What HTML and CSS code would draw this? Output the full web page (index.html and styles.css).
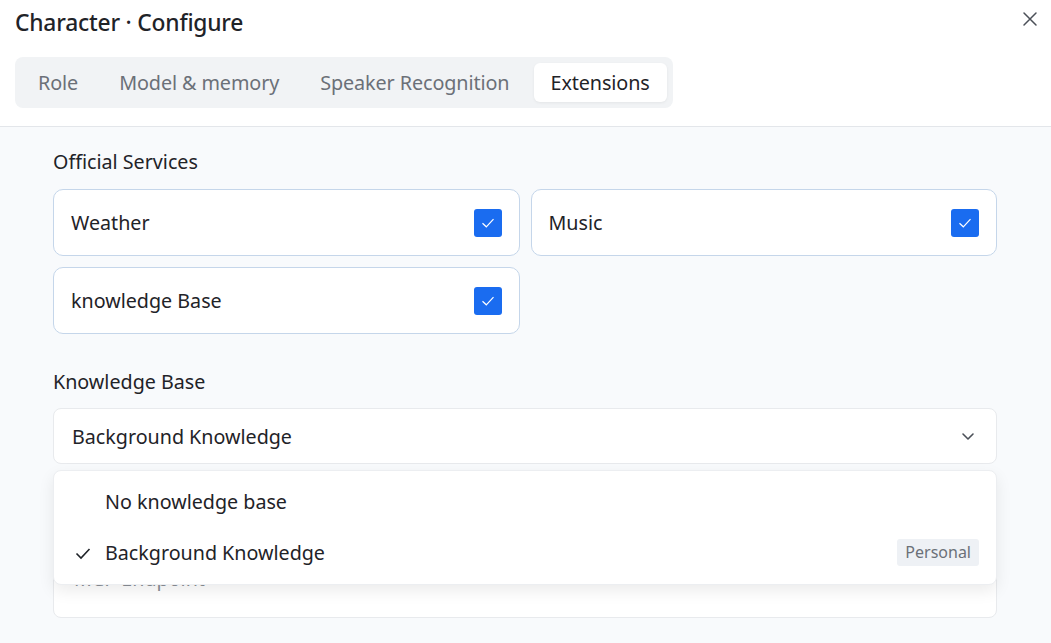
FILE: index.html
```html
<!DOCTYPE html>
<html lang="en">
<head>
    <meta charset="UTF-8">
    <meta name="viewport" content="width=device-width, initial-scale=1.0">
    <title>Character · Configure</title>
    <link rel="stylesheet" href="styles.css">
</head>
<body>
    <div class="dialog">
        <div class="dialog-header">
            <h1 class="title">Character · Configure</h1>
            <button class="close-btn" aria-label="Close">
                <svg width="16" height="16" viewBox="0 0 16 16"><path d="M2 2 L14 14 M14 2 L2 14" stroke="#4b5058" stroke-width="1.5" fill="none" stroke-linecap="round"/></svg>
            </button>
            <div class="tabs">
                <div class="tab">Role</div>
                <div class="tab">Model &amp; memory</div>
                <div class="tab">Speaker Recognition</div>
                <div class="tab active">Extensions</div>
            </div>
        </div>

        <div class="dialog-body">
            <div class="section-label">Official Services</div>
            <div class="service-grid">
                <div class="service-card">
                    <span>Weather</span>
                    <span class="checkbox"><svg width="18" height="18" viewBox="0 0 18 18"><path d="M3.5 9.2 L7.3 12.8 L14.5 5.2" stroke="#fff" stroke-width="1.2" fill="none"/></svg></span>
                </div>
                <div class="service-card">
                    <span>Music</span>
                    <span class="checkbox"><svg width="18" height="18" viewBox="0 0 18 18"><path d="M3.5 9.2 L7.3 12.8 L14.5 5.2" stroke="#fff" stroke-width="1.2" fill="none"/></svg></span>
                </div>
                <div class="service-card">
                    <span>knowledge Base</span>
                    <span class="checkbox"><svg width="18" height="18" viewBox="0 0 18 18"><path d="M3.5 9.2 L7.3 12.8 L14.5 5.2" stroke="#fff" stroke-width="1.2" fill="none"/></svg></span>
                </div>
            </div>

            <div class="section-label kb-label">Knowledge Base</div>
            <div class="select-wrap">
                <div class="select">
                    <span>Background Knowledge</span>
                    <svg width="16" height="16" viewBox="0 0 16 16"><path d="M3 6 L8 11 L13 6" stroke="#4b5058" stroke-width="1.6" fill="none" stroke-linecap="round" stroke-linejoin="round"/></svg>
                </div>
                <div class="dropdown">
                    <div class="option">
                        <span class="option-check"></span>
                        <span>No knowledge base</span>
                    </div>
                    <div class="option">
                        <span class="option-check"><svg width="18" height="18" viewBox="0 0 18 18"><path d="M2.5 9.5 L7 14 L15.5 5" stroke="#1f2328" stroke-width="1.6" fill="none"/></svg></span>
                        <span>Background Knowledge</span>
                        <span class="badge">Personal</span>
                    </div>
                </div>
            </div>

            <div class="section-label mcp-label">MCP Endpoint</div>
            <div class="input">MCP Endpoint</div>
        </div>
    </div>
</body>
</html>
```

FILE: styles.css
```css
* {
    box-sizing: border-box;
}

body {
    margin: 0;
    font-family: "Noto Sans", "Liberation Sans", sans-serif;
    color: #1f2328;
    background: #f8fafc;
    height: 100vh;
    overflow: hidden;
}

.dialog-header {
    position: relative;
    background: #fff;
    border-bottom: 1px solid #e3e6ea;
    padding: 6px 15px 18px;
    height: 127px;
}

.title {
    margin: 0;
    font-size: 22.8px;
    font-weight: 500;
    line-height: 34px;
    letter-spacing: -0.2px;
}

.close-btn {
    position: absolute;
    top: 11px;
    right: 13px;
    background: none;
    border: none;
    padding: 0;
    cursor: pointer;
}

.tabs {
    display: inline-flex;
    gap: 7px;
    margin-top: 17px;
    padding: 6px;
    background: #f1f3f5;
    border-radius: 8px;
}

.tab {
    padding: 0 17px;
    height: 39px;
    line-height: 39px;
    font-size: 19.8px;
    letter-spacing: -0.1px;
    color: #6b7078;
    border-radius: 6px;
}

.tab.active {
    background: #fff;
    color: #1f2328;
    box-shadow: 0 1px 3px rgba(0, 0, 0, 0.06);
}

.dialog-body {
    padding: 20px 54px 0 53px;
}

.section-label {
    font-size: 19.7px;
    line-height: 30px;
    margin-bottom: 12px;
}

.service-grid {
    display: grid;
    grid-template-columns: 1fr 1fr;
    gap: 11px 11px;
}

.service-card {
    display: flex;
    align-items: center;
    justify-content: space-between;
    height: 67px;
    padding: 0 17px;
    background: #fff;
    border: 1px solid #c5d6ea;
    border-radius: 10px;
    font-size: 19.7px;
}

.checkbox {
    width: 28px;
    height: 28px;
    border-radius: 3px;
    background: #1a6cf0;
    display: flex;
    align-items: center;
    justify-content: center;
}

.kb-label {
    margin-top: 33px;
    margin-bottom: 11px;
}

.select-wrap {
    position: relative;
}

.select {
    display: flex;
    align-items: center;
    justify-content: space-between;
    height: 56px;
    padding: 0 20px 0 18px;
    background: #fff;
    border: 1px solid #e8eaed;
    border-radius: 8px;
    font-size: 19.7px;
}

.dropdown {
    position: absolute;
    top: 62px;
    left: 0;
    right: 0;
    z-index: 2;
    background: #fff;
    border: 1px solid #eceef1;
    border-radius: 8px;
    box-shadow: 0 6px 16px rgba(0, 0, 0, 0.08);
    padding: 5px 17px 6px 20px;
}

.option {
    display: flex;
    align-items: center;
    height: 51px;
    font-size: 19.7px;
}

.option-check {
    width: 31px;
    display: flex;
    align-items: center;
}

.badge {
    margin-left: auto;
    background: #eef1f5;
    color: #6b7078;
    font-size: 16px;
    padding: 0 8px;
    height: 27px;
    line-height: 27px;
    border-radius: 3px;
}

.mcp-label {
    margin-top: 48px;
}

.input {
    height: 64px;
    padding: 10px 20px 0;
    line-height: 27px;
    background: #fff;
    border: 1px solid #e8eaed;
    border-radius: 8px;
    font-size: 19.7px;
    color: #8a8f96;
}
```
